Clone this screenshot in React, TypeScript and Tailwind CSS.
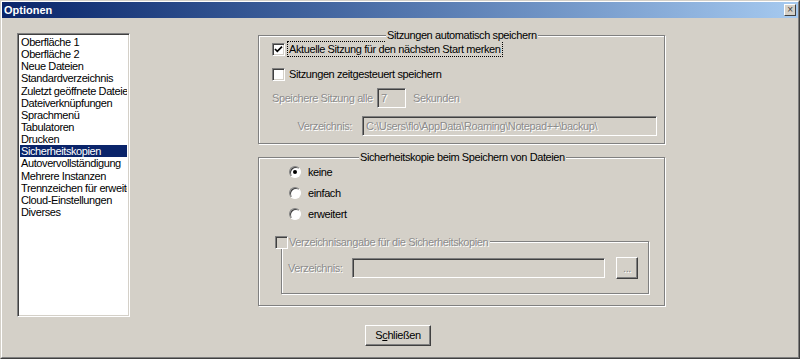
import React from 'react';

const pages = [
    'Oberfläche 1',
    'Oberfläche 2',
    'Neue Dateien',
    'Standardverzeichnis',
    'Zuletzt geöffnete Dateien',
    'Dateiverknüpfungen',
    'Sprachmenü',
    'Tabulatoren',
    'Drucken',
    'Sicherheitskopien',
    'Autovervollständigung',
    'Mehrere Instanzen',
    'Trennzeichen für erweiterte Suche',
    'Cloud-Einstellungen',
    'Diverses',
];

const disabledText = 'text-[#8c8c8c] [text-shadow:1px_1px_0_#ffffff]';

function CheckBox({ checked, disabled }: { checked?: boolean; disabled?: boolean }) {
    return (
        <span
            className={`flex h-[13px] w-[13px] shrink-0 items-center justify-center border border-t-[#808080] border-l-[#808080] border-b-white border-r-white shadow-[inset_1px_1px_0_#404040,inset_-1px_-1px_0_#d4d0c8] ${disabled ? 'bg-[#d4d0c8]' : 'bg-white'}`}
        >
            {checked && (
                <svg width="9" height="9" viewBox="0 0 9 9">
                    <path d="M1 4 L3.3 6.4 L8 1.6" fill="none" stroke="#000" strokeWidth="1.7" />
                </svg>
            )}
        </span>
    );
}

function Radio({ checked, label }: { checked?: boolean; label: string }) {
    return (
        <div className="flex h-[16px] items-center gap-[7px]">
            <span className="flex h-[12px] w-[12px] items-center justify-center rounded-full border border-t-[#808080] border-l-[#808080] border-b-white border-r-white bg-white shadow-[inset_1px_1px_0_#404040]">
                {checked && <span className="h-[4px] w-[4px] rounded-full bg-black" />}
            </span>
            <span>{label}</span>
        </div>
    );
}

function Field({ className, children }: { className: string; children?: React.ReactNode }) {
    return (
        <div
            className={`flex items-center overflow-hidden whitespace-nowrap border border-t-[#808080] border-l-[#808080] border-b-white border-r-white bg-[#d4d0c8] px-[3px] shadow-[inset_1px_1px_0_#404040] ${disabledText} ${className}`}
        >
            {children}
        </div>
    );
}

export default function App() {
    return (
        <div className="h-[359px] w-[800px] overflow-hidden border border-t-[#d4d0c8] border-l-[#d4d0c8] border-r-[#404040] border-b-[#404040] bg-[#d4d0c8] font-['Liberation_Sans',Arial,sans-serif] text-[11px] tracking-[-0.4px] text-black">
            <div className="h-full border border-t-white border-l-white border-r-[#808080] border-b-[#808080]">
                {/* Title bar */}
                <div className="flex h-[16px] items-center justify-between bg-gradient-to-r from-[#0a246a] to-[#a6caf0] pl-[2px] pr-[2px]">
                    <span className="text-[11px] font-bold tracking-normal text-white">Optionen</span>
                    <span className="flex h-[12px] w-[12px] items-center justify-center border border-t-white border-l-white border-r-[#404040] border-b-[#404040] bg-[#d4d0c8] text-[10px] leading-none text-[#404040]">
                        ×
                    </span>
                </div>

                <div className="flex pl-[15px] pt-[15px]">
                    {/* Page list */}
                    <div className="h-[284px] w-[113px] overflow-hidden border border-t-[#808080] border-l-[#808080] border-b-white border-r-white bg-white p-[2px] shadow-[inset_1px_1px_0_#404040,inset_-1px_-1px_0_#d4d0c8]">
                        {pages.map((p, i) => (
                            <div
                                key={p}
                                className={`h-[12.15px] overflow-hidden whitespace-nowrap pl-[1px] leading-[12.15px] ${i === 9 ? 'bg-[#0a246a] text-white' : ''}`}
                            >
                                {p}
                            </div>
                        ))}
                    </div>

                    <div className="ml-[128px] mt-[2px] flex w-[407px] flex-col">
                        {/* Sitzungen */}
                        <div className="relative h-[109px] border border-[#808080] pl-[13px] pt-[5px] shadow-[inset_1px_1px_0_#fff,1px_1px_0_#fff]">
                            <span className="absolute -top-[7px] left-[127px] bg-[#d4d0c8] px-[1px] leading-[13px]">
                                Sitzungen automatisch speichern
                            </span>
                            <div className="flex h-[16px] items-center gap-[2px]">
                                <CheckBox checked />
                                <span className="border border-dotted border-black px-[1px] leading-[14px]">
                                    Aktuelle Sitzung für den nächsten Start merken
                                </span>
                            </div>
                            <div className="mt-[9px] flex h-[16px] items-center gap-[4px]">
                                <CheckBox />
                                <span>Sitzungen zeitgesteuert speichern</span>
                            </div>
                            <div className="mt-[6px] flex h-[20px] items-center">
                                <span className={`w-[105px] ${disabledText}`}>Speichere Sitzung alle</span>
                                <Field className="h-[20px] w-[29px]">7</Field>
                                <span className={`ml-[7px] ${disabledText}`}>Sekunden</span>
                            </div>
                            <div className="mt-[8px] flex h-[20px] items-center">
                                <span className={`w-[80px] text-right ${disabledText}`}>Verzeichnis:</span>
                                <Field className="ml-[10px] h-[20px] w-[295px]">
                                    {'C:\\Users\\flo\\AppData\\Roaming\\Notepad++\\backup\\'}
                                </Field>
                            </div>
                        </div>

                        {/* Sicherheitskopie */}
                        <div className="relative mt-[13px] h-[149px] border border-[#808080] pl-[30px] pt-[6px] shadow-[inset_1px_1px_0_#fff,1px_1px_0_#fff]">
                            <span className="absolute -top-[7px] left-[100px] bg-[#d4d0c8] px-[1px] leading-[13px]">
                                Sicherheitskopie beim Speichern von Dateien
                            </span>
                            <Radio checked label="keine" />
                            <div className="mt-[5px]">
                                <Radio label="einfach" />
                            </div>
                            <div className="mt-[5px]">
                                <Radio label="erweitert" />
                            </div>

                            <div className="relative -ml-[8px] mt-[19px] h-[53px] w-[368px] border border-[#808080] pl-[6px] pt-[15px] shadow-[inset_1px_1px_0_#fff,1px_1px_0_#fff]">
                                <span className="absolute -left-[7px] -top-[6px] flex items-center gap-[1px] bg-[#d4d0c8] pr-[2px] leading-[13px]">
                                    <CheckBox disabled />
                                    <span className={disabledText}>Verzeichnisangabe für die Sicherheitskopien</span>
                                </span>
                                <div className="flex items-center">
                                    <span className={`w-[64px] ${disabledText}`}>Verzeichnis:</span>
                                    <Field className="h-[20px] w-[253px]" />
                                    <span
                                        className={`ml-[11px] flex h-[22px] w-[22px] items-center justify-center border border-t-white border-l-white border-r-[#404040] border-b-[#404040] shadow-[inset_-1px_-1px_0_#808080] ${disabledText}`}
                                    >
                                        ...
                                    </span>
                                </div>
                            </div>
                        </div>
                    </div>
                </div>

                <div className="mt-[8px] flex justify-center pr-[4px]">
                    <button className="flex h-[21px] w-[66px] items-center justify-center border border-t-white border-l-white border-r-[#404040] border-b-[#404040] bg-[#d4d0c8] shadow-[inset_-1px_-1px_0_#808080]">
                        S<u>c</u>hließen
                    </button>
                </div>
            </div>
        </div>
    );
}
